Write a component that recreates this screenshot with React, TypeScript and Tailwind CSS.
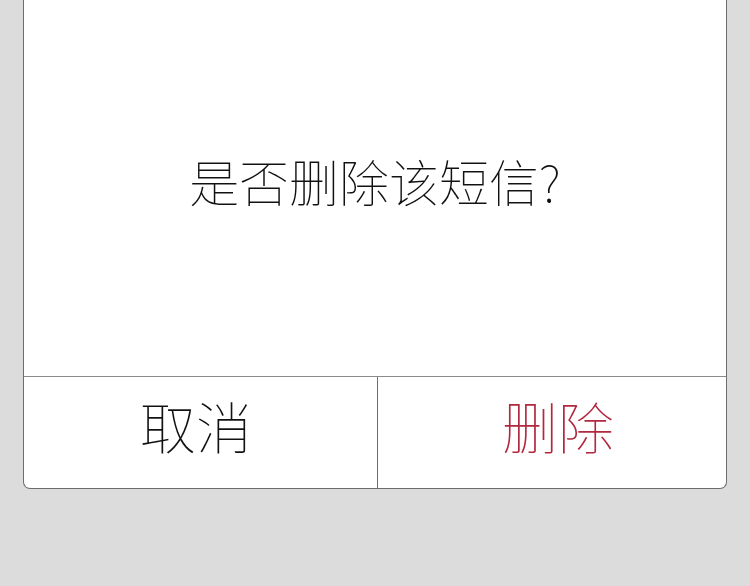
export default function App() {
  return (
    <div
      className="h-[586px] w-[750px] overflow-hidden bg-[#dcdcdc]"
      style={{ fontFamily: '"Noto Sans CJK SC", "Noto Sans", sans-serif' }}
    >
      <div className="mx-[23px] flex h-[489px] flex-col rounded-b-[7px] border-x border-b border-[#6e6e6e] bg-white">
        <div className="flex h-[376px] items-center justify-center pb-[16px]">
          <p className="text-[50px] font-thin text-[#111]">是否删除该短信?</p>
        </div>
        <div className="flex flex-1 border-t border-[#8a8a8a]">
          <button className="flex w-[353px] items-center justify-center pb-[16px] pr-[9px] text-[56px] font-thin text-[#111]">
            取消
          </button>
          <div className="w-px bg-[#6e6e6e]" />
          <button className="flex flex-1 items-center justify-center pb-[16px] pl-[12px] text-[56px] font-thin text-[#b1283f]">
            删除
          </button>
        </div>
      </div>
    </div>
  )
}
